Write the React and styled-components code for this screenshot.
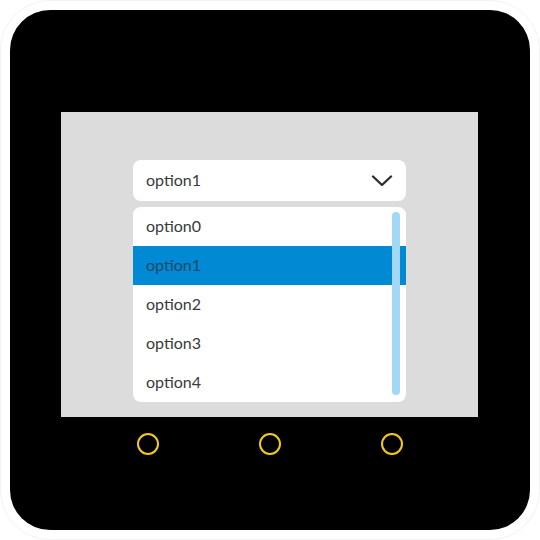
import React from 'react';
import styled, {createGlobalStyle} from 'styled-components';

const Global = createGlobalStyle`
  html, body {
    margin: 0;
    background: #ffffff;
  }
  * {
    box-sizing: border-box;
  }
`;

const Frame = styled.div`
  width: 540px;
  height: 540px;
  padding: 10px;
  border-radius: 50px;
  box-shadow: inset 0 0 0 1px #f3f3f3;
`;

const Device = styled.div`
  width: 520px;
  height: 520px;
  background: #000000;
  border-radius: 40px;
  padding: 102px 0 0 51px;
  display: flex;
  flex-direction: column;
`;

const Screen = styled.div`
  width: 417px;
  height: 305px;
  background: #dcdcdc;
  padding: 48px 0 0 72px;
  display: flex;
  flex-direction: column;
  gap: 6px;
  font-family: Lato, "Noto Sans", sans-serif;
  font-size: 16px;
  font-weight: 400;
  color: #3a3a3a;
`;

const Dropdown = styled.div`
  width: 273px;
  height: 41px;
  background: #ffffff;
  border-radius: 8px;
  padding: 0 13px 3px;
  display: flex;
  align-items: center;
  justify-content: space-between;
`;

const List = styled.div`
  position: relative;
  width: 273px;
  height: 195px;
  background: #ffffff;
  border-radius: 8px;
  overflow: hidden;
`;

const Item = styled.div`
  height: 39px;
  padding: 0 13px 3px;
  display: flex;
  align-items: center;
  background: ${p => (p.selected ? '#0289d3' : 'transparent')};
  color: ${p => (p.selected ? '#1b4867' : '#3a3a3a')};
`;

const Scrollbar = styled.div`
  position: absolute;
  right: 6px;
  top: 5px;
  width: 8px;
  height: 183px;
  border-radius: 4px;
  background: #a3d7f6;
`;

const Buttons = styled.div`
  width: 417px;
  display: flex;
  justify-content: center;
  gap: 100px;
  padding-top: 16px;
`;

const Ring = styled.div`
  width: 22px;
  height: 22px;
  border-radius: 50%;
  border: 2.5px solid #f2cb1d;
`;

const Chevron = () => (
  <svg width="22" height="12" viewBox="0 0 22 12" style={{marginTop: 3}}>
    <path d="M2 1.5 L11 10 L20 1.5" fill="none" stroke="#2f2f2f" strokeWidth="2.4" strokeLinecap="round" strokeLinejoin="round" />
  </svg>
);

const options = ['option0', 'option1', 'option2', 'option3', 'option4'];

export default function App() {
  return (
    <>
      <Global />
      <Frame>
        <Device>
          <Screen>
            <Dropdown>
              <span>option1</span>
              <Chevron />
            </Dropdown>
            <List>
              {options.map(o => (
                <Item key={o} selected={o === 'option1'}>{o}</Item>
              ))}
              <Scrollbar />
            </List>
          </Screen>
          <Buttons>
            <Ring />
            <Ring />
            <Ring />
          </Buttons>
        </Device>
      </Frame>
    </>
  );
}
